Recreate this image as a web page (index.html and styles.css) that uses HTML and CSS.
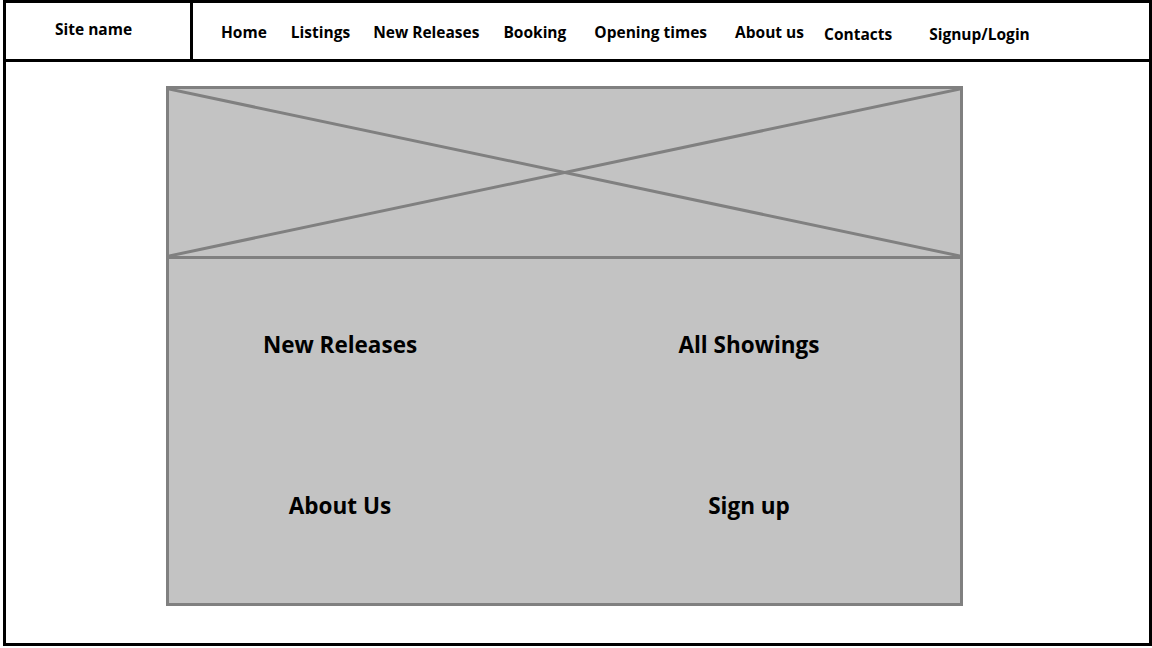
FILE: index.html
```html
<!DOCTYPE html>
<html lang="en">
<head>
<meta charset="utf-8">
<title>Cinema wireframe</title>
<link rel="stylesheet" href="styles.css">
</head>
<body>
<div class="frame">
  <header class="header">
    <div class="site-name">Site name</div>
    <nav class="nav">
      <a class="nav-item n-home">Home</a>
      <a class="nav-item n-listings">Listings</a>
      <a class="nav-item n-new">New Releases</a>
      <a class="nav-item n-booking">Booking</a>
      <a class="nav-item n-opening">Opening times</a>
      <a class="nav-item n-about">About us</a>
      <a class="nav-item n-contacts low">Contacts</a>
      <a class="nav-item n-signup low">Signup/Login</a>
    </nav>
  </header>
  <main class="main">
    <div class="content">
      <div class="hero">
        <svg class="hero-x" viewBox="0 0 791 167" preserveAspectRatio="none">
          <line x1="0" y1="0" x2="791" y2="167"/>
          <line x1="791" y1="0" x2="0" y2="167"/>
        </svg>
      </div>
      <div class="panel">
        <div class="panel-item">New Releases</div>
        <div class="panel-item">All Showings</div>
        <div class="panel-item">About Us</div>
        <div class="panel-item">Sign up</div>
      </div>
    </div>
  </main>
</div>
</body>
</html>
```
FILE: styles.css
```css
* { box-sizing: border-box; }
html, body { margin: 0; padding: 0; background: #fff; }
body {
  width: 1152px;
  height: 648px;
  font-family: "Open Sans", Lato, sans-serif;
  font-weight: 700;
  color: #000;
}
.frame {
  margin: 0 0 0 3px;
  width: 1149px;
  height: 646px;
  border: 3px solid #000;
  display: flex;
  flex-direction: column;
}
.header {
  height: 59px;
  border-bottom: 3px solid #000;
  display: flex;
}
.site-name {
  width: 187px;
  border-right: 3px solid #000;
  font-size: 15.5px;
  line-height: 20px;
  padding: 16px 0 0 49px;
}
.nav {
  display: flex;
  align-items: flex-start;
  padding: 19px 0 0 28px;
  font-size: 15.5px;
  line-height: 20px;
}
.nav-item { color: #000; text-decoration: none; white-space: nowrap; }
.nav-item.low { padding-top: 2px; }
.n-listings { margin-left: 24px; }
.n-new { margin-left: 23px; }
.n-booking { margin-left: 24px; }
.n-opening { margin-left: 28px; }
.n-about { margin-left: 28px; }
.n-contacts { margin-left: 20px; }
.n-signup { margin-left: 37px; }
.main {
  flex: 1;
  padding: 24px 0 0 160px;
}
.content {
  width: 797px;
}
.hero {
  height: 173px;
  border: 3px solid #808080;
  background: #c3c3c3;
  display: flex;
}
.hero-x {
  width: 100%;
  height: 100%;
  display: block;
}
.hero-x line {
  stroke: #808080;
  stroke-width: 3;
  vector-effect: non-scaling-stroke;
}
.panel {
  height: 347px;
  border: 3px solid #808080;
  border-top: none;
  background: #c3c3c3;
  display: grid;
  grid-template-columns: 200px 200px;
  column-gap: 209px;
  row-gap: 130px;
  align-content: start;
  padding: 70px 0 0 71px;
  font-size: 22.5px;
}
.panel-item {
  text-align: center;
  line-height: 31px;
}
```
